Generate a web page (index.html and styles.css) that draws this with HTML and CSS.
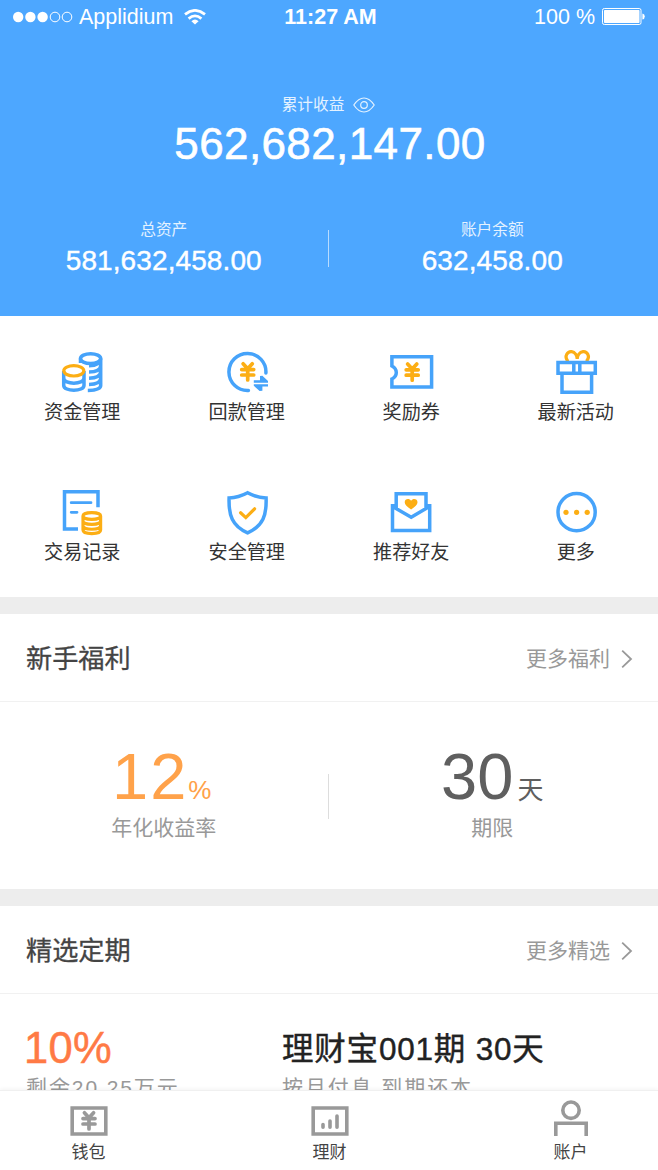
FILE: index.html
```html
<!DOCTYPE html>
<html lang="zh-CN">
<head>
<meta charset="utf-8">
<title>账户</title>
<link rel="stylesheet" href="styles.css">
</head>
<body>
<svg width="0" height="0" class="defs"><defs>
<g id="yen" fill="none" stroke-width="3.7" stroke-linecap="round"><path d="M-4.6-8 0-3 4.6-8M-6-2.2H6M-6 3.2H6M0-3V8.2"/></g>
</defs></svg>
<main class="screen">
  <header class="hero">
    <div class="status">
      <div class="carrier">
        <svg width="60" height="12" viewBox="0 0 60 12"><g fill="#fff"><circle cx="5.2" cy="6" r="5.2"/><circle cx="17.4" cy="6" r="5.2"/><circle cx="29.6" cy="6" r="5.2"/></g><g fill="none" stroke="#fff"><circle cx="42" cy="6" r="4.8"/><circle cx="54" cy="6" r="4.8"/></g></svg>
        <span>Applidium</span>
        <svg class="wifi" width="22" height="16" viewBox="0 0 22 16"><g fill="none" stroke="#fff" stroke-width="2.8"><path d="M1 5.4Q11-2.6 21 5.4"/><path d="M4.6 9.6Q11 4.2 17.4 9.6"/></g><path d="M7.4 12.2Q11 9 14.6 12.2L11 15.6Z" fill="#fff"/></svg>
      </div>
      <b class="time">11:27 AM</b>
      <div class="power"><span>100 %</span>
        <svg width="43" height="17" viewBox="0 0 43 17"><rect x=".5" y=".5" width="38.5" height="16" rx="1.8" fill="none" stroke="#fff"/><rect x="2" y="2" width="35.5" height="13" rx=".8" fill="#fff"/><path d="M40.4 5.4Q42.8 6 42.8 8.5T40.4 11.6Z" fill="#fff"/></svg>
      </div>
    </div>
    <div class="earn-label"><span>累计收益</span><svg width="22" height="16" viewBox="0 0 22 16" fill="none" stroke="#e4f2ff" stroke-width="1.2"><path d="M.8 8Q5.5 1 11 1T21.2 8Q16.5 15 11 15T.8 8Z"/><circle cx="11" cy="8" r="3.3"/></svg></div>
    <div class="earn">562,682,147.00</div>
    <div class="assets">
      <div class="asset"><span>总资产</span><strong>581,632,458.00</strong></div>
      <i class="rule"></i>
      <div class="asset"><span>账户余额</span><strong>632,458.00</strong></div>
    </div>
  </header>

  <nav class="grid">
    <a class="cell"><svg class="icon" viewBox="0 0 48 48"><g class="blue"><ellipse cx="32.6" cy="10.6" rx="10.1" ry="4.9"/><path d="M22.5 10.6V15M42.7 10.6V37.5Q42.7 42.2 29.8 42.4M31 17.7Q42 17.6 42.7 11M31 24Q42 24 42.7 18M31 30.3Q42 30 42.7 24M31 36.4Q42 36.4 42.7 30.5"/><path d="M5.7 23V37.2C5.7 44 26 44 26 37.2V23M5.7 30C5.7 37 26 37 26 30"/></g><ellipse class="gold" cx="15.8" cy="22.8" rx="10" ry="5.2"/></svg><span>资金管理</span></a>
    <a class="cell"><svg class="icon" viewBox="0 0 48 48"><path class="blue" stroke-linecap="round" d="M42.9 25A18.5 18.5 0 1 0 25.4 42.4"/><use href="#yen" class="gold" x="24.7" y="23.8"/><path class="solid" d="M30.8 32.2H37V28L39.4 27.8 45 33V34.8H30.8ZM45 38.6H39.4V42.8L36.6 43 30.8 37.8V36.2H45Z"/></svg><span>回款管理</span></a>
    <a class="cell"><svg class="icon" viewBox="0 0 48 48"><path class="blue" d="M4.9 8.8H44.6V38.9H4.9V31Q9.3 29 9.3 24.6T4.9 18Z"/><use href="#yen" class="gold" x="25.2" y="24"/></svg><span>奖励券</span></a>
    <a class="cell"><svg class="icon" viewBox="0 0 48 48"><path class="gold" d="M16 13.4C11.5 8 16 3.2 19.6 3.7C23 4.2 25 7.5 25.2 11C25.4 7.5 27.6 4.2 31 3.7C34.6 3.2 39 8 34.4 13.4"/><path class="blue" d="M6 14.5H43.3V25.2H6ZM10 25V44.3H39.6V25M21.8 14V25M27.8 14V25"/></svg><span>最新活动</span></a>
    <a class="cell"><svg class="icon" viewBox="0 0 48 48"><path class="blue" d="M20 41H6.5V3.8H40V19.3"/><path class="blue thin" stroke-linecap="round" d="M13.2 14.7H33M13.2 24.3H19"/><path class="gold" d="M25 28C25 23.4 42.6 23.4 42.6 28S25 32.6 25 28V42C25 46.8 42.6 46.8 42.6 42V28M25 33C25 37.6 42.6 37.6 42.6 33M25 37.8C25 42.4 42.6 42.4 42.6 37.8"/></svg><span>交易记录</span></a>
    <a class="cell"><svg class="icon" viewBox="0 0 48 48"><path class="blue" d="M24.6 4.8Q15.5 9.7 6.1 10C5.5 27 9 38 24.6 44.8C40.2 38 43.7 27 43.1 10Q33.7 9.7 24.6 4.8Z"/><path class="gold" stroke-linecap="round" d="M17.6 24.8 22.8 29.6 31.6 20.8"/></svg><span>安全管理</span></a>
    <a class="cell"><svg class="icon" viewBox="0 0 48 48"><path class="blue" d="M9.2 20V5.7H39V20M10 17.8H5.5V42.6H42.7V17.8H38M6 18.8 24.2 29.2 42 18.8"/><path fill="#fcae14" d="M24.1 21.4C20 18.7 17.7 16.8 17.7 14.2C17.7 10.6 22.3 9.8 24.1 12.8C25.9 9.8 30.5 10.6 30.5 14.2C30.5 16.8 28.2 18.7 24.1 21.4Z"/></svg><span>推荐好友</span></a>
    <a class="cell"><svg class="icon" viewBox="0 0 48 48"><circle class="blue" cx="24.6" cy="24.2" r="18.6"/><g fill="#fcae14"><circle cx="14" cy="24.3" r="2.6"/><circle cx="24.6" cy="24.3" r="2.6"/><circle cx="35.2" cy="24.3" r="2.6"/></g></svg><span>更多</span></a>
  </nav>

  <section class="panel">
    <div class="head"><h2>新手福利</h2><a class="more">更多福利<svg width="12" height="20" viewBox="0 0 12 20"><path d="M1.2 1.6 10 10 1.2 18.4"/></svg></a></div>
    <div class="stats">
      <div class="stat rate"><p><b>12</b><small>%</small></p><span>年化收益率</span></div>
      <i class="rule"></i>
      <div class="stat term"><p><b>30</b><small>天</small></p><span>期限</span></div>
    </div>
  </section>

  <section class="panel">
    <div class="head"><h2>精选定期</h2><a class="more">更多精选<svg width="12" height="20" viewBox="0 0 12 20"><path d="M1.2 1.6 10 10 1.2 18.4"/></svg></a></div>
    <div class="product">
      <div class="yield"><strong>10%</strong><span>剩余20.25万元</span></div>
      <div class="plan"><strong>理财宝001期 30天</strong><span>按月付息 到期还本</span></div>
    </div>
  </section>
</main>
<nav class="tabs">
  <a class="tab"><svg width="38" height="38" viewBox="0 0 38 38"><path d="M2.2 9H35.8V35H2.2Z"/><use href="#yen" x="19" y="21.8"/></svg><span>钱包</span></a>
  <a class="tab"><svg width="38" height="38" viewBox="0 0 38 38"><path d="M2.2 9H35.8V35H2.2Z"/><path stroke-linecap="round" d="M12 25.5V28.2M19 22V28.2M26 17V28.2"/></svg><span>理财</span></a>
  <a class="tab"><svg width="38" height="38" viewBox="0 0 38 38"><circle cx="19" cy="11.2" r="8.2"/><path d="M3.8 37V24.3H34.2V37"/></svg><span>账户</span></a>
</nav>
</body>
</html>
```
FILE: styles.css
```css
* { box-sizing: border-box; }
body {
  margin: 0;
  width: 658px;
  height: 1170px;
  overflow: hidden;
  display: flex;
  flex-direction: column;
  background: #fff;
  color: #333;
  font-family: "Liberation Sans", "Noto Sans CJK SC", sans-serif;
}
h2, p { margin: 0; font-weight: 400; }
strong { font-weight: 400; }
svg { display: block; flex: none; }
.defs { position: absolute; }
.screen { flex: 1; min-height: 0; overflow: hidden; }

.hero { height: 316px; background: #4da7ff; color: #fff; }
.status {
  display: grid;
  grid-template-columns: 1fr auto 1fr;
  align-items: center;
  height: 33px;
  padding: 0 13px;
  font-size: 21.5px;
  line-height: 32px;
}
.carrier, .power { display: flex; align-items: center; }
.carrier { gap: 6px; }
.wifi { margin-left: 5px; }
.time { padding-left: 3px; font-size: 21.5px; }
.power { justify-content: flex-end; gap: 7px; }
.earn-label {
  display: flex;
  justify-content: center;
  align-items: center;
  gap: 9px;
  height: 24px;
  margin-top: 60px;
  padding-right: 1px;
  color: #e4f2ff;
  font-size: 15.7px;
  line-height: 24px;
}
.earn {
  margin-top: 1px;
  padding-left: 2px;
  text-align: center;
  font-size: 44px;
  line-height: 52px;
  letter-spacing: .4px;
  -webkit-text-stroke: .6px #fff;
}
.assets { display: flex; align-items: center; height: 60px; margin-top: 48px; padding-right: 2px; }
.asset { flex: 1; display: flex; flex-direction: column; align-items: center; }
.asset span { color: #e4f2ff; font-size: 15.7px; line-height: 24px; }
.asset strong { margin-top: 2px; font-size: 28px; line-height: 34px; letter-spacing: .1px; -webkit-text-stroke: .4px #fff; }
.assets .rule { width: 1px; height: 37px; background: #b8dcff; }

.grid {
  display: grid;
  grid-template-columns: repeat(4, 1fr);
  grid-auto-rows: 140px;
  height: 281px;
  padding-top: 32px;
}
.cell { display: flex; flex-direction: column; align-items: center; font-size: 19.1px; line-height: 30px; }
.cell span { padding-top: 2px; }
.icon { width: 48px; height: 48px; }
.blue { fill: none; stroke: #46a3fa; stroke-width: 3.5; }
.thin { stroke-width: 2.8; }
.solid { fill: #46a3fa; }
.gold { fill: none; stroke: #fcae14; stroke-width: 3.2; }

.panel { border-top: 17px solid #ededed; }
.head {
  display: flex;
  align-items: center;
  justify-content: space-between;
  height: 88px;
  padding: 2px 25px 0 26px;
  border-bottom: 1px solid #f1f1f1;
}
h2 { padding-top: 1px; color: #444; font-size: 26.2px; line-height: 40px; -webkit-text-stroke: .3px #444; }
.more { display: flex; align-items: center; gap: 11px; color: #999; font-size: 21px; line-height: 32px; }
.more svg { fill: none; stroke: #999; stroke-width: 1.8; }
.stats { display: flex; height: 187px; padding: 38px 2px 0 0; }
.stats .rule { width: 1px; height: 45px; margin-top: 34px; background: #ddd; }
.stat { flex: 1; display: flex; flex-direction: column; align-items: center; }
.stat p { display: flex; align-items: baseline; height: 72px; line-height: 74px; }
.stat b { font-size: 65px; font-weight: 400; }
.stat span { color: #999; font-size: 21px; line-height: 32px; }
.rate p { padding-right: 4px; color: #ffa24a; }
.rate b { letter-spacing: 2px; }
.rate small { font-size: 26px; }
.term p { color: #5f5f5f; }
.term small { margin-left: 4px; font-size: 26px; }

.product { display: flex; padding: 28px 24px 0; }
.yield { width: 258px; }
.product strong, .product span { display: block; white-space: nowrap; }
.product strong { height: 52px; line-height: 52px; }
.yield strong { color: #ff7a45; font-size: 43.5px; letter-spacing: .3px; -webkit-text-stroke: .5px #ff7a45; }
.plan strong { padding-top: 1px; color: #222; font-size: 31.5px; letter-spacing: .8px; -webkit-text-stroke: .4px #222; }
.product span { color: #999; font-size: 21px; line-height: 28px; letter-spacing: 1.9px; }
.yield span { padding-left: 2px; }

.tabs {
  display: flex;
  justify-content: space-between;
  flex: none;
  height: 80px;
  padding: 8px 59px 0 60px;
  background: #fff;
  border-top: 1px solid #f0f0f0;
  box-shadow: 0 -1px 4px rgba(0, 0, 0, .05);
  position: relative;
}
.tab { width: 57px; display: flex; flex-direction: column; align-items: center; color: #444; font-size: 17px; line-height: 30px; }
.tab span { padding-top: 1px; }
.tab svg { fill: none; stroke: #999; stroke-width: 3.6; }
```
